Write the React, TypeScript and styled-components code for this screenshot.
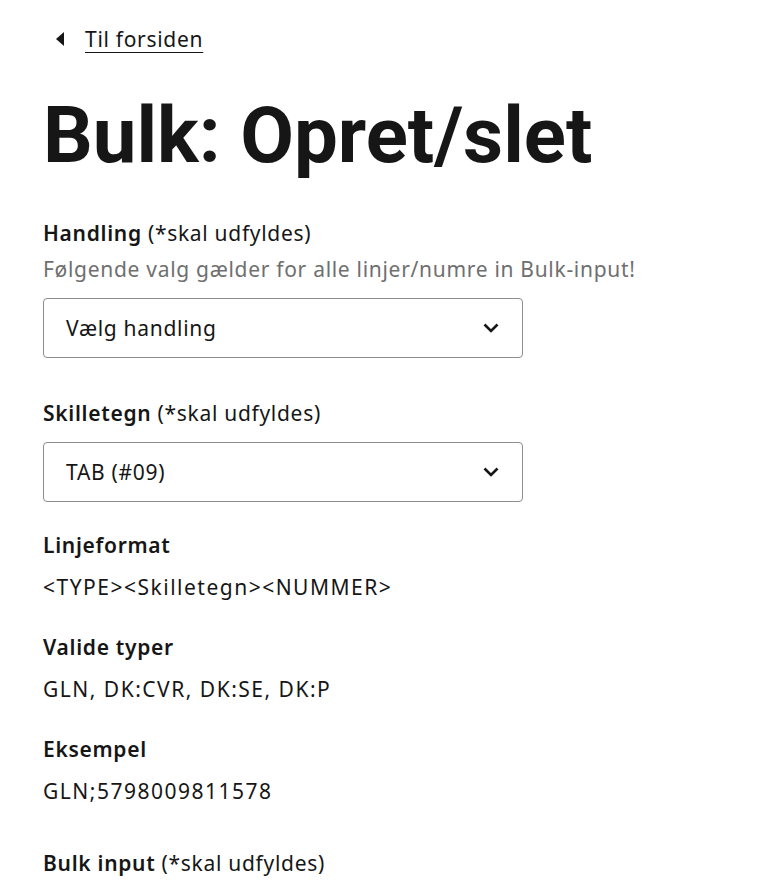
import React from "react";
import styled, { createGlobalStyle } from "styled-components";

const GlobalStyle = createGlobalStyle`
  html, body {
    margin: 0;
    padding: 0;
    background: #ffffff;
  }
  body {
    font-family: "Noto Sans", "Liberation Sans", sans-serif;
    font-size: 21px;
    letter-spacing: 0.7px;
    color: #161616;
  }
`;

const Page = styled.main`
  padding: 24px 43px 0 43px;
  display: flex;
  flex-direction: column;
`;

const BackLink = styled.a`
  display: flex;
  align-items: center;
  gap: 21px;
  margin-left: 13px;
  font-size: 21px;
  line-height: 30px;
  color: #161616;
  text-decoration: underline;
  text-underline-offset: 5px;
  text-decoration-thickness: 1px;
  cursor: pointer;
`;

const Title = styled.h1`
  margin: 34px 0 0 0;
  font-family: Roboto, "Noto Sans", sans-serif;
  font-size: 78px;
  line-height: 96px;
  font-weight: 700;
  letter-spacing: 0;
`;

const Field = styled.section<{ $gap?: number }>`
  display: flex;
  flex-direction: column;
  margin-top: ${(p) => p.$gap ?? 0}px;
`;

const Label = styled.div`
  font-size: 21px;
  line-height: 30px;
  font-weight: 400;
  b {
    font-weight: 600;
  }
`;

const Hint = styled.div`
  font-size: 21px;
  line-height: 30px;
  color: #6f6f6f;
  margin-top: 6px;
`;

const Value = styled.div`
  font-size: 21px;
  line-height: 30px;
  letter-spacing: 1.5px;
  margin-top: 12px;
`;

const SelectBox = styled.div`
  box-sizing: border-box;
  width: 480px;
  height: 60px;
  margin-top: 14px;
  border: 1px solid #8d8d8d;
  border-radius: 4px;
  display: flex;
  align-items: center;
  justify-content: space-between;
  padding: 0 22px 0 22px;
  font-size: 21px;
`;

const Chevron = () => (
  <svg width="18" height="12" viewBox="0 0 18 12" aria-hidden="true">
    <path d="M2.5 2.5 L9 9 L15.5 2.5" fill="none" stroke="#161616" strokeWidth="2.6" />
  </svg>
);

const Caret = () => (
  <svg width="8" height="14" viewBox="0 0 8 14" aria-hidden="true">
    <path d="M8 0 L0 7 L8 14 Z" fill="#161616" />
  </svg>
);

const App: React.FC = () => {
  return (
    <>
      <GlobalStyle />
      <Page>
        <BackLink>
          <Caret />
          <span>Til forsiden</span>
        </BackLink>
        <Title>Bulk: Opret/slet</Title>

        <Field $gap={34}>
          <Label>
            <b>Handling</b> (*skal udfyldes)
          </Label>
          <Hint>Følgende valg gælder for alle linjer/numre in Bulk-input!</Hint>
          <SelectBox>
            <span>Vælg handling</span>
            <Chevron />
          </SelectBox>
        </Field>

        <Field $gap={40}>
          <Label>
            <b>Skilletegn</b> (*skal udfyldes)
          </Label>
          <SelectBox>
            <span>TAB (#09)</span>
            <Chevron />
          </SelectBox>
        </Field>

        <Field $gap={28}>
          <Label>
            <b>Linjeformat</b>
          </Label>
          <Value>&lt;TYPE&gt;&lt;Skilletegn&gt;&lt;NUMMER&gt;</Value>
        </Field>

        <Field $gap={30}>
          <Label>
            <b>Valide typer</b>
          </Label>
          <Value>GLN, DK:CVR, DK:SE, DK:P</Value>
        </Field>

        <Field $gap={30}>
          <Label>
            <b>Eksempel</b>
          </Label>
          <Value>GLN;5798009811578</Value>
        </Field>

        <Field $gap={42}>
          <Label>
            <b>Bulk input</b> (*skal udfyldes)
          </Label>
        </Field>
      </Page>
    </>
  );
};

export default App;
